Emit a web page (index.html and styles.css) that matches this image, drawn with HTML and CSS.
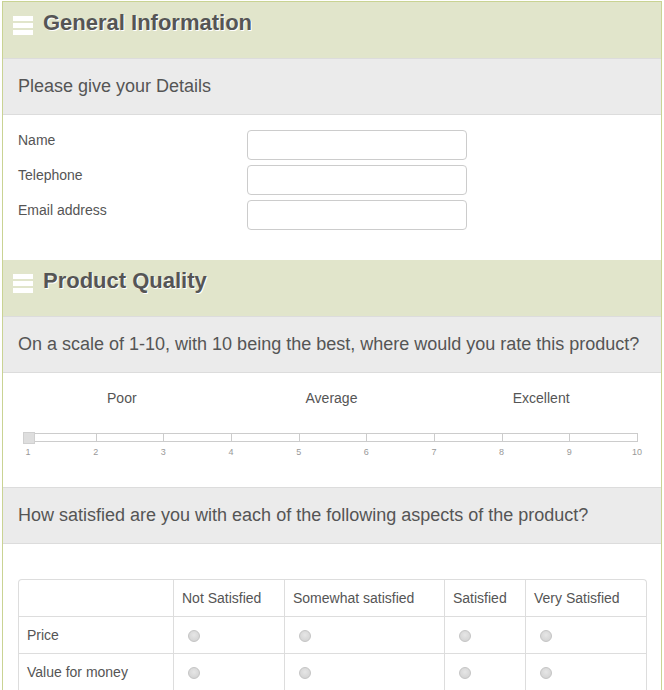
FILE: index.html
```html
<!DOCTYPE html>
<html lang="en">
<head>
    <meta charset="UTF-8">
    <meta name="viewport" content="width=device-width, initial-scale=1.0">
    <title>Product Survey</title>
    <link rel="stylesheet" href="styles.css">
</head>
<body>
    <div class="survey">
        <div class="section-head">
            <span class="menu-icon"><i></i><i></i><i></i></span>
            <h2>General Information</h2>
        </div>
        <div class="question">Please give your Details</div>
        <div class="details">
            <div class="field">
                <label for="name">Name</label>
                <input type="text" id="name">
            </div>
            <div class="field">
                <label for="phone">Telephone</label>
                <input type="text" id="phone">
            </div>
            <div class="field">
                <label for="email">Email address</label>
                <input type="text" id="email">
            </div>
        </div>

        <div class="section-head">
            <span class="menu-icon"><i></i><i></i><i></i></span>
            <h2>Product Quality</h2>
        </div>
        <div class="question">On a scale of 1-10, with 10 being the best, where would you rate this product?</div>
        <div class="rating">
            <div class="rating-labels">
                <span>Poor</span>
                <span>Average</span>
                <span>Excellent</span>
            </div>
            <div class="slider">
                <div class="track">
                    <span></span><span></span><span></span><span></span><span></span>
                    <span></span><span></span><span></span><span></span>
                </div>
                <div class="handle"></div>
            </div>
            <div class="ticks">
                <span>1</span><span>2</span><span>3</span><span>4</span><span>5</span>
                <span>6</span><span>7</span><span>8</span><span>9</span><span>10</span>
            </div>
        </div>

        <div class="question">How satisfied are you with each of the following aspects of the product?</div>
        <div class="aspects">
            <table class="grid">
                <tr>
                    <th class="c1"></th>
                    <th class="c2">Not Satisfied</th>
                    <th class="c3">Somewhat satisfied</th>
                    <th class="c4">Satisfied</th>
                    <th class="c5">Very Satisfied</th>
                </tr>
                <tr>
                    <td>Price</td>
                    <td><input type="radio" name="price"></td>
                    <td><input type="radio" name="price"></td>
                    <td><input type="radio" name="price"></td>
                    <td><input type="radio" name="price"></td>
                </tr>
                <tr>
                    <td>Value for money</td>
                    <td><input type="radio" name="value"></td>
                    <td><input type="radio" name="value"></td>
                    <td><input type="radio" name="value"></td>
                    <td><input type="radio" name="value"></td>
                </tr>
            </table>
        </div>
    </div>
</body>
</html>
```

FILE: styles.css
```css
body {
    font-family: 'Liberation Sans', Arial, sans-serif;
    color: #555;
    margin: 0;
    background: #fff;
}
.survey {
    width: 658px;
    margin: 1px 0 0 2px;
    border: 1px solid #c9d393;
    border-bottom: none;
}
.section-head {
    background-color: #e1e5cb;
    height: 56px;
    display: flex;
    align-items: flex-start;
    padding: 0 0 0 10px;
}
.menu-icon {
    display: flex;
    flex-direction: column;
    gap: 2px;
    margin-top: 14px;
    width: 20px;
}
.menu-icon i {
    display: block;
    height: 5px;
    background: #fff;
}
.section-head h2 {
    margin: 8px 0 0 10px;
    font-size: 22px;
    font-weight: bold;
    color: #555;
    text-shadow: 1px 1px 0 #fff;
}
.question {
    background-color: #ebebeb;
    border-top: 1px solid #dcdcdc;
    border-bottom: 1px solid #dcdcdc;
    height: 55px;
    line-height: 55px;
    padding-left: 15px;
    font-size: 18px;
    color: #555;
}
.details {
    padding: 15px 15px 30px;
    display: flex;
    flex-direction: column;
    gap: 5px;
}
.field {
    display: flex;
    align-items: flex-start;
}
.field label {
    width: 229px;
    font-size: 14px;
    padding-top: 2px;
}
.field input {
    margin: 0;
    padding: 0 6px;
    box-sizing: border-box;
    width: 220px;
    height: 30px;
    border: 1px solid #ccc;
    border-radius: 4px;
    background: #fff;
}
.rating {
    padding: 16px 15px 0 14px;
    height: 98px;
}
.rating-labels {
    display: grid;
    grid-template-columns: 1fr 1fr 1fr;
    text-align: center;
    font-size: 14px;
    height: 18px;
    line-height: 18px;
}
.slider {
    position: relative;
    margin: 26px 0 0 6px;
    width: 615px;
}
.track {
    height: 7px;
    border: 1px solid #ccc;
    background: #fff;
    display: flex;
    padding-left: 5px;
}
.track span {
    flex: 1;
    border-right: 1px solid #ccc;
}
.track span:last-child {
    border-right: none;
}
.handle {
    position: absolute;
    left: 0;
    top: -1px;
    width: 10px;
    height: 10px;
    background: #dedede;
    border: 1px solid #d0d0d0;
}
.ticks {
    display: flex;
    justify-content: space-between;
    margin: 5px 0 0 11px;
    width: 609px;
    font-size: 9px;
    color: #999;
}
.ticks span {
    width: 0;
    display: flex;
    justify-content: center;
}
.aspects {
    padding: 35px 15px 0;
}
.grid {
    width: 629px;
    border-collapse: separate;
    border-spacing: 0;
    border: 1px solid #ddd;
    border-bottom: none;
    border-radius: 4px 4px 0 0;
    font-size: 14px;
    color: #555;
}
.grid th,
.grid td {
    height: 36px;
    padding: 0 8px;
    text-align: left;
    font-weight: normal;
    border-left: 1px solid #ddd;
    border-bottom: 1px solid #ddd;
    vertical-align: middle;
}
.grid th:first-child,
.grid td:first-child {
    border-left: none;
}
.c1 { width: 138px; }
.c2 { width: 94px; }
.c3 { width: 143px; }
.c4 { width: 64px; }
.c5 { width: 104px; }
.grid input[type=radio] {
    appearance: none;
    -webkit-appearance: none;
    width: 12px;
    height: 12px;
    margin: 1px 0 0 6px;
    border-radius: 50%;
    border: 1px solid #c4c4c4;
    background: radial-gradient(circle at 50% 40%, #e6e6e6, #cfcfcf);
    display: block;
}
```
